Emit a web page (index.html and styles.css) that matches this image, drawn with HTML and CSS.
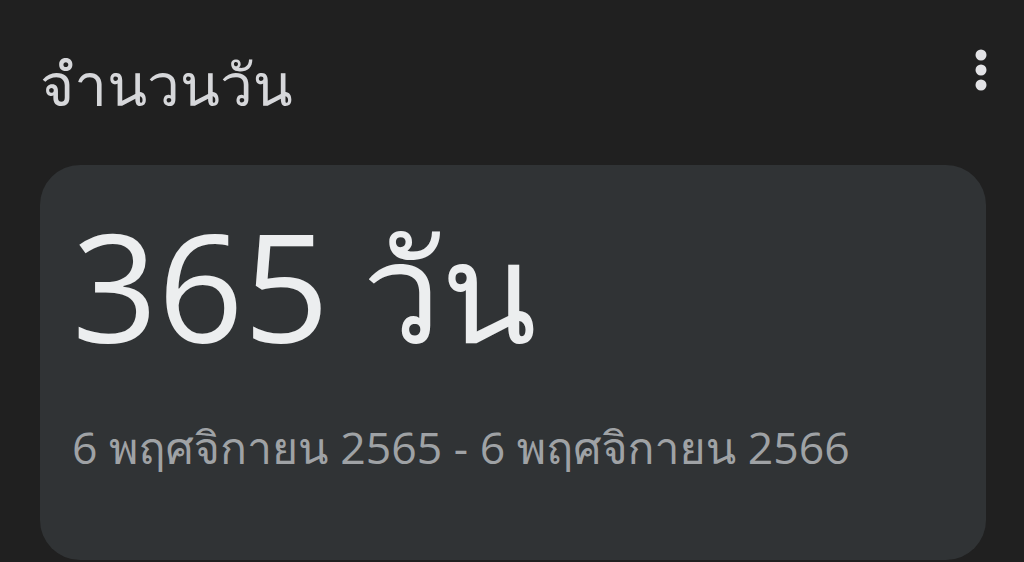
FILE: index.html
```html
<!DOCTYPE html>
<html lang="th">
<head>
<meta charset="utf-8">
<link rel="stylesheet" href="styles.css">
</head>
<body>
<div class="screen">
  <header class="top">
    <h1 class="title">จำนวนวัน</h1>
    <button class="menu" aria-label="เมนู">
      <svg width="14" height="44" viewBox="0 0 14 44"><circle cx="7" cy="6" r="5.5" fill="#e3e3e6"/><circle cx="7" cy="21" r="5.5" fill="#e3e3e6"/><circle cx="7" cy="36" r="5.5" fill="#e3e3e6"/></svg>
    </button>
  </header>
  <section class="card">
    <div class="big">365 <span class="unit">วัน</span></div>
    <div class="range">6 พฤศจิกายน 2565 - 6 พฤศจิกายน 2566</div>
  </section>
</div>
</body>
</html>
```
FILE: styles.css
```css
html, body {
  margin: 0;
  padding: 0;
  background: #202020;
  height: 100%;
  overflow: hidden;
}
.screen {
  font-family: "Open Sans", Loma, "Noto Sans", sans-serif;
  padding: 0 38px 0 40px;
}
.top {
  display: flex;
  align-items: flex-start;
  justify-content: space-between;
  height: 165px;
}
.title {
  margin: 48px 0 0 0;
  font-weight: 400;
  font-size: 58.5px;
  line-height: 70px;
  color: #d6d7da;
}
.menu {
  margin: 49px -2px 0 0;
  padding: 0;
  border: 0;
  background: none;
  width: 14px;
  height: 44px;
  display: block;
}
.menu svg {
  display: block;
}
.card {
  background: #303335;
  border-radius: 40px;
  height: 395px;
  padding: 0 32px;
}
.big {
  font-size: 150px;
  line-height: 180px;
  color: #eceeef;
  padding-top: 30px;
  margin-left: 0;
}
.unit {
  font-size: 140px;
  margin-left: -6px;
}
.range {
  font-size: 44.6px;
  line-height: 60px;
  color: #9fa2a5;
  margin-top: 38px;
}
```
